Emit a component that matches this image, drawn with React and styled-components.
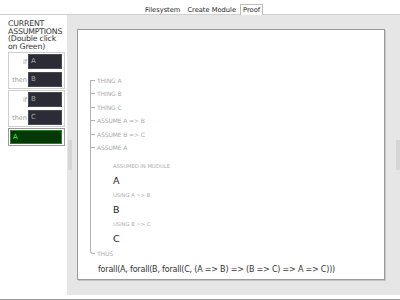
import React from "react";
import styled, { createGlobalStyle } from "styled-components";

const GlobalStyle = createGlobalStyle`
  html, body {
    margin: 0;
    padding: 0;
    background: #fff;
  }
  body {
    font-family: "DejaVu Sans", "Noto Sans", sans-serif;
  }
`;

const assumptions = [
  { kind: "imp", if: "A", then: "B" },
  { kind: "imp", if: "B", then: "C" },
  { kind: "fact", value: "A" },
];

const steps = [
  "THING A",
  "THING B",
  "THING C",
  "ASSUME A => B",
  "ASSUME B => C",
];

function App() {
  return (
    <Page>
      <GlobalStyle />
      <TabBar>
        <Tab>Filesystem</Tab>
        <Tab>Create Module</Tab>
        <Tab $active>Proof</Tab>
      </TabBar>

      <Body>
        <Sidebar>
          <Heading>
            CURRENT
            <br />
            ASSUMPTIONS
            <br />
            (Double click
            <br />
            on Green)
          </Heading>
          {assumptions.map((a, i) =>
            a.kind === "imp" ? (
              <Card key={i}>
                <Label>if</Label>
                <Slot>{a.if}</Slot>
                <Label>then</Label>
                <Slot>{a.then}</Slot>
              </Card>
            ) : (
              <GreenCard key={i}>
                <GreenSlot>{a.value}</GreenSlot>
              </GreenCard>
            )
          )}
        </Sidebar>

        <Main>
          <Handle />
          <Panel>
            <Tree>
              {steps.map((s, i) => (
                <Step key={s} $first={i === 0}>
                  <StepLabel>{s}</StepLabel>
                </Step>
              ))}
              <Step>
                <StepLabel>ASSUME A</StepLabel>
                <Nested>
                  <SubLabel $top>ASSUMED IN MODULE</SubLabel>
                  <Term>A</Term>
                  <SubLabel>USING A =&gt; B</SubLabel>
                  <Term>B</Term>
                  <SubLabel>USING B =&gt; C</SubLabel>
                  <Term>C</Term>
                </Nested>
              </Step>
              <Step $last>
                <StepLabel>THUS</StepLabel>
              </Step>
            </Tree>
            <Result>
              forall(A, forall(B, forall(C, (A =&gt; B) =&gt; (B =&gt; C) =&gt; A =&gt; C)))
            </Result>
          </Panel>
          <Handle $right />
        </Main>
      </Body>
      <Footer />
    </Page>
  );
}

export default App;

const Page = styled.div`
  width: 400px;
  height: 300px;
  display: flex;
  flex-direction: column;
  overflow: hidden;
`;

const TabBar = styled.div`
  height: 14px;
  border-bottom: 1px solid #cfcfcf;
  display: flex;
  align-items: flex-end;
  padding-left: 142px;
  gap: 1px;
`;

const Tab = styled.div`
  font-size: 6.7px;
  line-height: 10px;
  height: 10px;
  padding: 0 2px;
  color: #222;
  background: ${(p) => (p.$active ? "#fff" : "transparent")};
  border: 1px solid ${(p) => (p.$active ? "#bdbdbd" : "transparent")};
  border-bottom: none;
  margin-bottom: -1px;
  position: relative;
`;

const Body = styled.div`
  flex: 1;
  display: flex;
  min-height: 0;
`;

const Sidebar = styled.div`
  width: 67px;
  box-sizing: border-box;
  padding: 5px 2px 0 8px;
  display: flex;
  flex-direction: column;
  gap: 1px;
`;

const Heading = styled.div`
  font-size: 7.8px;
  line-height: 7.6px;
  color: #333;
  margin-bottom: 1px;
  letter-spacing: -0.2px;
`;

const Card = styled.div`
  border: 1px solid #cfcfcf;
  padding: 1px 2px 1px 1px;
  display: grid;
  grid-template-columns: 18px 1fr;
  row-gap: 3px;
  column-gap: 0;
  align-items: center;
`;

const Label = styled.div`
  font-size: 6.5px;
  color: #999;
  text-align: right;
  padding-right: 1px;
`;

const Slot = styled.div`
  height: 13px;
  background: #2c2c36;
  border: 1px solid #4a4a52;
  color: #a8a8a8;
  font-size: 7px;
  line-height: 13px;
  padding-left: 2px;
`;

const GreenCard = styled.div`
  border: 1px solid #9a9a9a;
  padding: 1px 2px 1px 1px;
`;

const GreenSlot = styled.div`
  height: 12px;
  background: #063806;
  border: 1px solid #2a7a2a;
  color: #33ff33;
  font-size: 7px;
  line-height: 12px;
  padding-left: 2px;
`;

const Main = styled.div`
  flex: 1;
  background: #e6e6e6;
  display: flex;
  align-items: center;
`;

const Handle = styled.div`
  width: 4px;
  height: 30px;
  margin-left: ${(p) => (p.$right ? "11px" : "1px")};
  margin-right: ${(p) => (p.$right ? "0" : "5px")};
  background-image: radial-gradient(#9a9a9a 0.6px, transparent 0.7px);
  background-size: 2px 2px;
  background-color: #d6d6d6;
`;

const Panel = styled.div`
  align-self: stretch;
  margin: 14px 0 15px;
  width: 308px;
  box-sizing: border-box;
  background: #fff;
  border: 1px solid #9c9c9c;
  box-shadow: 1px 1px 0 #c4c4c4;
  display: flex;
  flex-direction: column;
  justify-content: flex-end;
  padding: 0 0 1px 12px;
`;

const Tree = styled.div`
  display: flex;
  flex-direction: column;
`;

const Step = styled.div`
  position: relative;
  padding-left: 7px;
  min-height: 13.5px;

  &::before {
    content: "";
    position: absolute;
    left: 0;
    top: ${(p) => (p.$first ? "6px" : "0")};
    bottom: ${(p) => (p.$last ? "auto" : "0")};
    height: ${(p) => (p.$last ? "6px" : "auto")};
    width: ${(p) => (p.$last ? "4px" : "0")};
    border-left: 1px solid #b4b4b4;
    border-bottom: ${(p) => (p.$last ? "1px solid #b4b4b4" : "none")};
    border-bottom-left-radius: ${(p) => (p.$last ? "3px" : "0")};
  }

  &::after {
    content: "";
    display: ${(p) => (p.$last ? "none" : "block")};
    position: absolute;
    left: 0;
    top: 6px;
    width: 5px;
    border-top: 1px solid #b4b4b4;
  }
`;

const StepLabel = styled.div`
  font-size: 6px;
  line-height: 13.5px;
  height: 13.5px;
  color: #aaa;
  letter-spacing: -0.1px;
`;

const Nested = styled.div`
  padding-left: 16px;
  display: flex;
  flex-direction: column;
  padding-bottom: 1px;
`;

const SubLabel = styled.div`
  font-size: 5.2px;
  line-height: 14px;
  color: #aaa;
  margin-top: ${(p) => (p.$top ? "4px" : "0")};
`;

const Term = styled.div`
  font-size: 9.5px;
  line-height: 15px;
  color: #222;
`;

const Result = styled.div`
  font-size: 8px;
  line-height: 16px;
  margin-top: 2px;
  color: #333;
  padding-left: 8px;
  white-space: nowrap;
  letter-spacing: -0.2px;
`;

const Footer = styled.div`
  height: 4px;
  border-bottom: 1px solid #9a9a9a;
`;
